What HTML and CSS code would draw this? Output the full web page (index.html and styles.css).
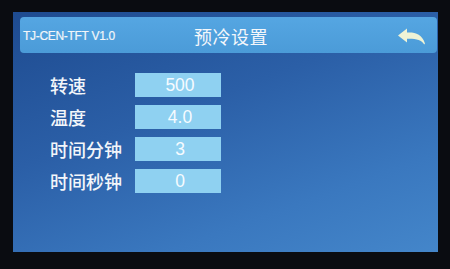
FILE: index.html
```html
<!DOCTYPE html>
<html lang="zh">
<head>
<meta charset="utf-8">
<title>预冷设置</title>
<link rel="stylesheet" href="styles.css">
</head>
<body>
<div class="bezel">
  <div class="screen">
    <div class="header">
      <span class="brand">TJ-CEN-TFT V1.0</span>
      <span class="title">预冷设置</span>
      <svg class="back" viewBox="0 0 30 20" width="30" height="20" aria-hidden="true">
        <path d="M1 8.5 L10 1.5 L10 5.5 C18 5 25 7 28 16.5 L27.2 17.5 C24.5 13 19 11.5 10 11.8 L10 15.5 Z" fill="#eef3d6"/>
      </svg>
    </div>
    <div class="form">
      <span class="label">转速</span><span class="value">500</span>
      <span class="label">温度</span><span class="value">4.0</span>
      <span class="label">时间分钟</span><span class="value">3</span>
      <span class="label">时间秒钟</span><span class="value">0</span>
    </div>
  </div>
</div>
</body>
</html>
```

FILE: styles.css
```css
html, body {
  margin: 0;
  padding: 0;
  background: #0a0c11;
  width: 450px;
  height: 269px;
  overflow: hidden;
}
.bezel {
  padding: 12px 12px 17px 13px;
  height: 269px;
  box-sizing: border-box;
}
.screen {
  height: 240px;
  box-sizing: border-box;
  padding: 5px 1px 0 7px;
  background: linear-gradient(160deg, #1e4b90 0%, #2b5fa7 40%, #3a78bf 75%, #4486ca 100%);
  display: flex;
  flex-direction: column;
}
.header {
  height: 36px;
  border-radius: 4px;
  background: linear-gradient(180deg, #55a6e2 0%, #4b9bd8 100%);
  display: flex;
  align-items: center;
  position: relative;
  padding: 0 10px 0 3px;
}
.brand {
  font-family: "Liberation Sans", Arial, sans-serif;
  font-size: 12px;
  font-weight: 500;
  color: #f2f6fa;
  letter-spacing: -0.3px;
  padding-top: 1px;
  -webkit-text-stroke: 0.2px #f2f6fa;
}
.title {
  position: absolute;
  left: 174px;
  top: 6px;
  font-family: "Noto Sans CJK SC", sans-serif;
  font-size: 18px;
  color: #f4f7fb;
  letter-spacing: 0.5px;
}
.back {
  margin-left: auto;
  margin-top: 3px;
  margin-right: 0;
}
.form {
  margin-top: 20px;
  margin-left: 30px;
  display: grid;
  grid-template-columns: 85px 86px;
  grid-auto-rows: 24px;
  row-gap: 8px;
}
.label {
  font-family: "Noto Sans CJK SC", sans-serif;
  font-size: 18px;
  font-weight: 500;
  line-height: 24px;
  color: #f3f6fa;
}
.value {
  background: #8fd1f1;
  color: #f6fbff;
  font-family: "Liberation Sans", Arial, sans-serif;
  font-size: 17.5px;
  line-height: 24px;
  text-align: center;
  padding-left: 4px;
}
```
